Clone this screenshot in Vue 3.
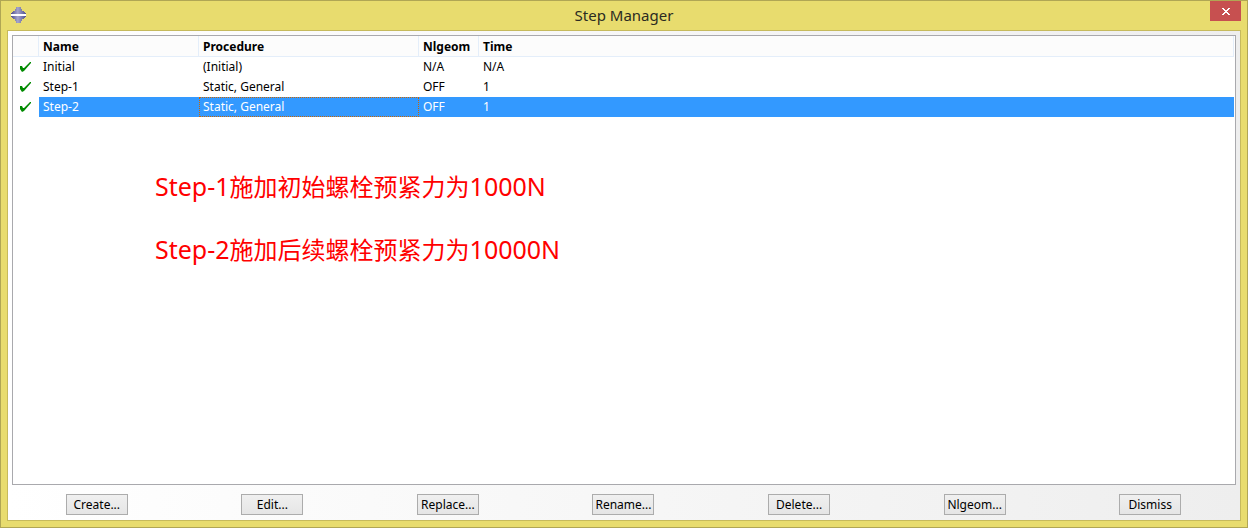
<script setup>
import { ref } from 'vue'

const steps = [
  { name: 'Initial', procedure: '(Initial)', nlgeom: 'N/A', time: 'N/A' },
  { name: 'Step-1', procedure: 'Static, General', nlgeom: 'OFF', time: '1' },
  { name: 'Step-2', procedure: 'Static, General', nlgeom: 'OFF', time: '1' },
]
const selected = ref(2)
const actions = ['Create...', 'Edit...', 'Replace...', 'Rename...', 'Delete...', 'Nlgeom...', 'Dismiss']
const notes = [
  ['Step-1', '施加初始螺栓预紧力为', '1000N'],
  ['Step-2', '施加后续螺栓预紧力为', '10000N'],
]
</script>

<template>
  <div class="window">
    <header class="titlebar">
      <svg class="logo" width="16" height="16" viewBox="0 0 16 16" aria-hidden="true">
        <defs>
          <linearGradient id="logo-shade" x1="0" x2="1" y1="0" y2="0">
            <stop offset="0" stop-color="#4c4c8c" />
            <stop offset="0.45" stop-color="#a4a4cc" />
            <stop offset="1" stop-color="#50508e" />
          </linearGradient>
        </defs>
        <path d="M5 0h5v2h1v2h2v1h1v1h1v4h-1v1h-1v1h-2v2h-1v2H5v-2H4v-2H2v-1H1v-1H0V6h1V5h1V4h2V2h1z" fill="url(#logo-shade)" />
        <path d="M0 7h15v2H0z" fill="#fff" />
      </svg>
      <h1>Step Manager</h1>
      <button class="close" type="button" aria-label="Close">
        <svg width="8" height="7" viewBox="0 0 8 7" shape-rendering="crispEdges" aria-hidden="true">
          <path d="M0 0h2v1h1v1h2V1h1V0h2v1H7v1H6v1H5v1h1v1h1v1h1v1H6V6H5V5H3v1H2v1H0V6h1V5h1V4h1V3H2V2H1V1H0z" fill="#fff" />
        </svg>
      </button>
    </header>
    <main class="client">
      <section class="list">
        <table>
          <colgroup>
            <col class="c-check" /><col class="c-name" /><col class="c-proc" /><col class="c-nl" /><col />
          </colgroup>
          <thead>
            <tr><th></th><th>Name</th><th>Procedure</th><th>Nlgeom</th><th>Time</th></tr>
          </thead>
          <tbody>
            <tr v-for="(s, i) in steps" :key="s.name" :class="{ selected: i === selected }" @click="selected = i">
              <td class="check">
                <svg width="12" height="10" viewBox="0 0 12 10" aria-hidden="true">
                  <path d="M0 4h2l1 2h1L10 0h1v1L4 9l-2 1L0 7z" fill="#008a00" />
                </svg>
              </td>
              <td>{{ s.name }}</td>
              <td class="proc">{{ s.procedure }}</td>
              <td>{{ s.nlgeom }}</td>
              <td>{{ s.time }}</td>
            </tr>
          </tbody>
        </table>
        <div class="notes">
          <p v-for="n in notes" :key="n[0]"><span>{{ n[0] }}</span>{{ n[1] }}<span>{{ n[2] }}</span></p>
        </div>
      </section>
      <footer class="actions">
        <button v-for="a in actions" :key="a" type="button">{{ a }}</button>
      </footer>
    </main>
  </div>
</template>

<style>
body {
  margin: 0;
}
</style>

<style scoped>
.window {
  box-sizing: border-box;
  display: flex;
  flex-direction: column;
  min-height: 100vh;
  padding: 0 6px 6px;
  border: 1px solid #b0a654;
  background: #e8dc6e;
  color: #000;
  font-family: "Noto Sans", "Noto Sans CJK SC", sans-serif;
  font-size: 12px;
}
.titlebar {
  display: grid;
  grid-template-columns: 1fr auto 1fr;
  align-items: start;
  height: 29px;
}
.logo {
  margin: 6px 0 0 4px;
}
h1 {
  margin: 0;
  font-size: 15px;
  font-weight: 400;
  line-height: 29px;
  color: #2b2b22;
}
.close {
  display: flex;
  align-items: center;
  justify-content: center;
  justify-self: end;
  width: 31px;
  height: 20px;
  padding: 1px 0 0;
  border: 0;
  background: #c75050;
}
.client {
  flex: 1;
  display: flex;
  flex-direction: column;
  padding: 4px 4px 0;
  border: 1px solid #c6ba5c;
  background: linear-gradient(90deg, #fff, #eee);
}
.list {
  position: relative;
  flex: 1;
  padding-right: 1px;
  border: 1px solid #a9a9ad;
  background: #fff;
}
table {
  width: 100%;
  table-layout: fixed;
  border-collapse: separate;
  border-spacing: 0;
}
.c-check { width: 26px; }
.c-name { width: 160px; }
.c-proc { width: 220px; }
.c-nl { width: 60px; }
th,
td {
  box-sizing: border-box;
  height: 20px;
  padding: 0 4px;
  line-height: 18px;
  text-align: left;
  white-space: nowrap;
}
th {
  height: 21px;
  padding: 2px 3px 0 4px;
  border-right: 1px solid #e4eefa;
  border-bottom: 1px solid #e4eefa;
  background: #fcfcfc;
  font-weight: 700;
}
td.check {
  padding: 0 0 0 7px;
}
.check svg {
  display: block;
}
.selected td:not(.check) {
  background: #3399ff;
  color: #fff;
}
.selected .proc {
  outline: 1px dotted #cc6600;
  outline-offset: -1px;
}
.notes {
  position: absolute;
  top: 119px;
  left: 142px;
  color: #f00;
  font-size: 24px;
}
.notes p {
  margin: 0;
  line-height: 62px;
  white-space: nowrap;
}
.notes span {
  font-size: 25px;
}
.actions {
  display: grid;
  grid-template-columns: repeat(7, 1fr);
  justify-items: center;
  margin: 0 -2px 0 -3px;
  padding: 9px 0 5px;
}
.actions button {
  width: 62px;
  height: 21px;
  padding: 0;
  border: 1px solid #acacac;
  background: linear-gradient(#f0f0f0, #e5e5e5);
  color: #000;
  font: inherit;
  line-height: 19px;
}
</style>
